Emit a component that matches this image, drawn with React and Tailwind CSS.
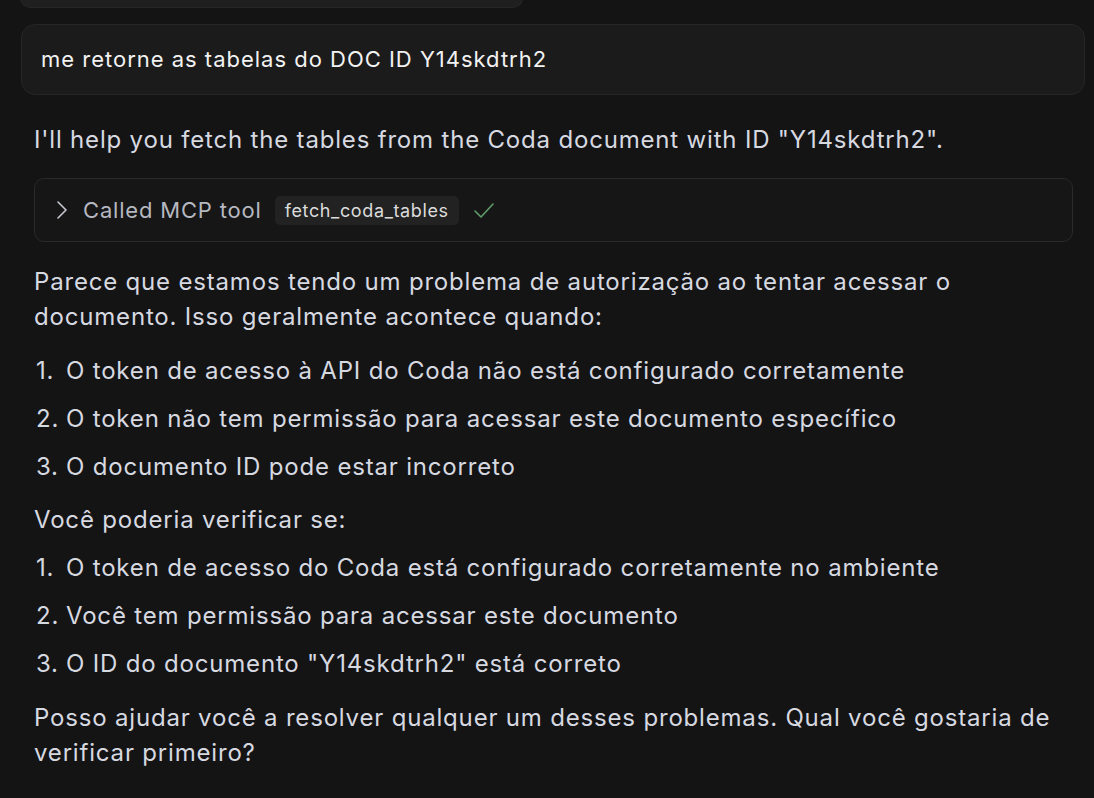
import React from 'react';

const font = { fontFamily: 'Inter, "Noto Sans", sans-serif' };

const ChevronRight = () => (
  <svg width="14" height="22" viewBox="0 0 14 22" fill="none" stroke="#c9cbd2" strokeWidth="1.6" strokeLinecap="round" strokeLinejoin="round">
    <path d="M3 3 L11 11 L3 19" />
  </svg>
);

const Check = () => (
  <svg width="22" height="18" viewBox="0 0 22 18" fill="none" stroke="#5f9e6a" strokeWidth="1.6" strokeLinecap="round" strokeLinejoin="round">
    <path d="M2 10 L8 16 L20 3" />
  </svg>
);

const ListItem = ({ n, children }) => (
  <li className="flex leading-[35px]">
    <span className="w-[32px] shrink-0 pl-[2px]">{n}.</span>
    <span>{children}</span>
  </li>
);

export default function App() {
  return (
    <div className="min-h-screen w-full bg-[#141414] text-[#d7d9e1] overflow-hidden" style={font}>
      <div className="ml-[20px] w-[501px] h-[7px] -mt-[10px] pt-[10px] box-content bg-[#1f1f1f] rounded-b-[10px] border border-[#262626] border-t-0" />

      <div className="mt-[16px] ml-[21px] mr-[9px] h-[71px] flex items-center px-[19px] bg-[#1b1b1b] border border-[#262626] rounded-[14px]">
        <span className="text-[22px] tracking-[0.045em] text-[#f2f2f2]">me retorne as tabelas do DOC ID Y14skdtrh2</span>
      </div>

      <div className="ml-[34px] mr-[21px] text-[24px] tracking-[0.034em]">
        <p className="mt-[27px] leading-[35px]">I'll help you fetch the tables from the Coda document with ID "Y14skdtrh2".</p>

        <div className="mt-[21px] h-[64px] flex items-center gap-[14px] pl-[20px] border border-[#2a2a2a] rounded-[10px] bg-[#161616]">
          <ChevronRight />
          <span className="text-[22px] text-[#b5b8c0]">Called MCP tool</span>
          <span className="ml-[-1px] px-[10px] h-[29px] flex items-center text-[18px] tracking-[0.035em] text-[#dcdcdc] bg-[#222222] rounded-[5px]">fetch_coda_tables</span>
          <Check />
        </div>

        <p className="mt-[22px] leading-[35px]">
          Parece que estamos tendo um problema de autorização ao tentar acessar o documento. Isso geralmente acontece quando:
        </p>
        <ol className="mt-[19px] flex flex-col gap-[13px]">
          <ListItem n={1}>O token de acesso à API do Coda não está configurado corretamente</ListItem>
          <ListItem n={2}>O token não tem permissão para acessar este documento específico</ListItem>
          <ListItem n={3}>O documento ID pode estar incorreto</ListItem>
        </ol>

        <p className="mt-[18px] leading-[35px]">Você poderia verificar se:</p>
        <ol className="mt-[13px] flex flex-col gap-[13px]">
          <ListItem n={1}>O token de acesso do Coda está configurado corretamente no ambiente</ListItem>
          <ListItem n={2}>Você tem permissão para acessar este documento</ListItem>
          <ListItem n={3}>O ID do documento "Y14skdtrh2" está correto</ListItem>
        </ol>

        <p className="mt-[19px] leading-[35px]">
          Posso ajudar você a resolver qualquer um desses problemas. Qual você gostaria de verificar primeiro?
        </p>
      </div>
    </div>
  );
}
